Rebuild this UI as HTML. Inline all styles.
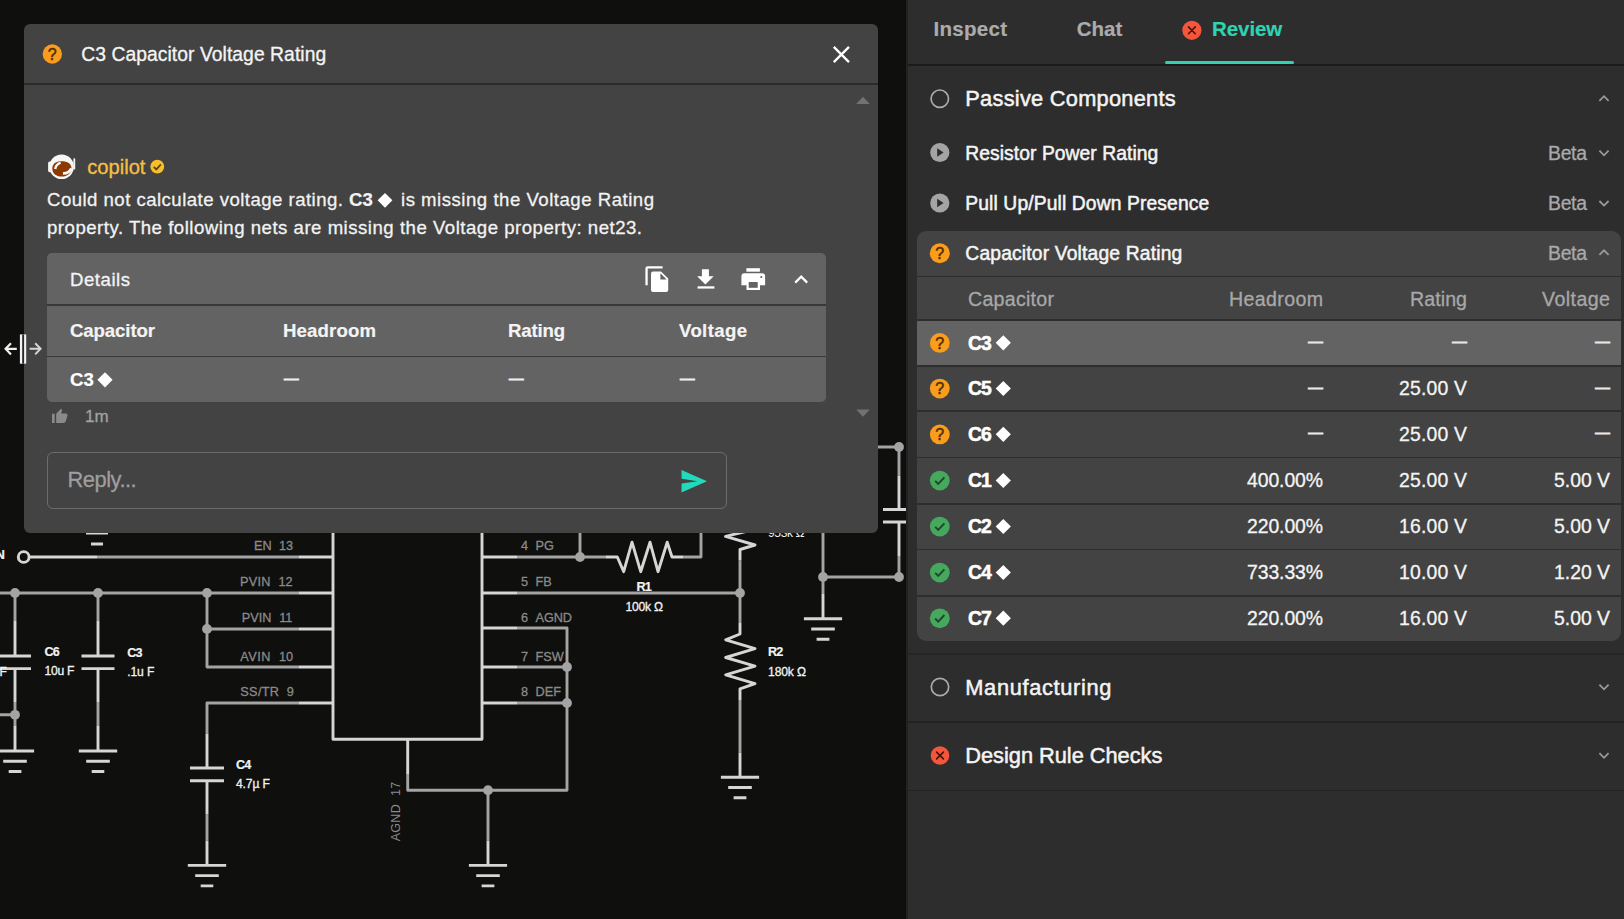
<!DOCTYPE html>
<html lang="en"><head><meta charset="utf-8"><title>Capacitor Voltage Rating review</title>
<style>
html,body{margin:0;padding:0;}
body{width:1624px;height:919px;overflow:hidden;background:#0f0f0e;font-family:"Liberation Sans", sans-serif;color:#fff;position:relative;}
.abs{position:absolute;}
.t{position:absolute;white-space:nowrap;line-height:1;-webkit-text-stroke:0.3px currentColor;}
.ns{-webkit-text-stroke:0.2px currentColor;}
.md{-webkit-text-stroke:0.5px currentColor;}
.bd{-webkit-text-stroke:0.5px currentColor;}
.ds{-webkit-text-stroke:0.8px currentColor;}
svg{position:absolute;left:0;top:0;overflow:visible;}
.w{fill:none;stroke:#d6d6d6;stroke-width:2.9;stroke-linecap:butt;stroke-linejoin:round;}
.n{fill:none;stroke:#a4a4a4;stroke-width:2.9;stroke-linecap:butt;stroke-linejoin:round;}
.d{fill:#a4a4a4;stroke:none;}
</style></head><body>
<svg width="1624" height="919" viewBox="0 0 1624 919">
<path class="n" d="M97 557H299M0 593H299M207 629H299M207 593V667H299M299 703H207V733.5M207 814.5V840.7M407.7 774V790.2H567V628H517M517 667H567M517 703H567M488 790.2V840.5M15 593V621M15 702V726M0 714.8H15M98 593V621M98 702V726M517 557H606M580 557V520M683 557H701V520M517 593H740M740 560.5V623M740 700V752.5M823 520V594M823 577H899M870 447H899V475.5M899 556V577"/>
<path class="w" d="M29 557H97M299 557H333M299 593H333M299 629H333M299 667H333M299 703H333M207 733.5V768M190 768H224M190 780.7H224M207 780.7V814.5M207 840.7V865.4M187.8 865.4H226.2M195.2 875.6H218.8M200.7 885.9H213.3M333 520V739.3H482V520M407.7 739.3V774M482 628H517M482 667H517M482 703H517M488 840.5V865.4M468.9 865.4H507.1M476.2 875.6H499.8M481.6 885.9H494.4M15 621V656M0 656H31M0 668.6H31M15 668.6V702M15 726V751M-4.1 751.0H34.1M3.2 761.2H26.8M8.7 771.5H21.4M98 621V656M81.500 656H114.500M81.500 668.6H114.500M98 668.6V702M98 726V751M78.8 751.0H117.2M86.2 761.2H109.8M91.7 771.5H104.3M86 533H108M91 544H103M482 557H517M606 557H617.3L623.7 571.7L632 542.2L640.7 571.7L650 542.2L658 571.7L667.2 542.2L672 557H683M482 593H517M752 530L725.5 536.3L755 545L740 549.5V560.5M740 623V634L725.7 639.8L755 648.7L725.7 657.5L755 666.2L725.7 674.9L755 683.6L740 688.8V700M740 752.5V777.2M720.9 777.2H759.1M728.2 787.5H751.8M733.6 797.7H746.4M823 594V618.7M803.9 618.7H842.1M811.2 629.0H834.8M816.6 639.2H829.4M899 475.5V509.5M883 509.5H906M883 522H906M899 522V556"/>
<circle class="d" cx="15" cy="593" r="4.9"/><circle class="d" cx="98" cy="593" r="4.9"/><circle class="d" cx="207" cy="593" r="4.9"/><circle class="d" cx="207" cy="629" r="4.9"/><circle class="d" cx="15" cy="714.8" r="4.9"/><circle class="d" cx="580" cy="557" r="4.9"/><circle class="d" cx="740" cy="593" r="4.9"/><circle class="d" cx="567" cy="667" r="4.9"/><circle class="d" cx="567" cy="703" r="4.9"/><circle class="d" cx="488" cy="790.2" r="4.9"/><circle class="d" cx="823" cy="577" r="4.9"/><circle class="d" cx="899" cy="577" r="4.9"/><circle class="d" cx="899" cy="447" r="4.9"/>
<circle cx="23.700" cy="557" r="5.400" fill="#0f0f0e" stroke="#d6d6d6" stroke-width="2.9"/>
<text x="768" y="537" font-family='"Liberation Sans", sans-serif' font-size="12.1" fill="#f0f0f0" letter-spacing="-0.4">953k Ω</text>
<text transform="translate(400.3 841.3) rotate(-90)" font-family='"Liberation Sans", sans-serif' font-size="12.5" fill="#8a8a8a" letter-spacing="0.3" word-spacing="4.2">AGND 17</text>
</svg>

<div class="abs" style="left:24px;top:24px;width:854px;height:508.500px;background:#434343;border-radius:6px;"></div>
<div class="abs" style="left:24px;top:83.4px;width:854px;height:1.6px;background:#2b2b2b;"></div>
<div class="abs" style="left:47px;top:253px;width:779px;height:148.500px;background:#636363;border-radius:5px;"></div>
<div class="abs" style="left:47px;top:304.2px;width:779px;height:1.7px;background:#383838;"></div>
<div class="abs" style="left:47px;top:355.8px;width:779px;height:1.7px;background:#383838;"></div>
<div class="abs" style="left:47px;top:452px;width:678px;height:55px;border:1px solid #6c6c6c;border-radius:6px;"></div>

<div class="abs" style="left:906px;top:0;width:718px;height:919px;background:#2d2d2d;"></div>
<div class="abs" style="left:906px;top:0;width:1.5px;height:919px;background:#222;"></div>
<div class="abs" style="left:908px;top:63.5px;width:716px;height:2px;background:#1b1b1b;"></div>
<div class="abs" style="left:1165px;top:61px;width:129px;height:3px;background:#2fd3b1;border-radius:1.5px;"></div>
<div class="abs" style="left:916.5px;top:231px;width:704.5px;height:410px;background:#434343;border-radius:9px;overflow:hidden;">
  <div class="abs" style="left:0;top:89.1px;width:705px;height:46.1px;background:#636363;"></div>
  <div class="abs" style="left:0;top:44.7px;width:705px;height:1.8px;background:#2e2e2e;"></div>
  <div class="abs" style="left:0;top:88.2px;width:705px;height:1.8px;background:#2e2e2e;"></div>
  <div class="abs" style="left:0;top:134.3px;width:705px;height:1.8px;background:#2e2e2e;"></div>
  <div class="abs" style="left:0;top:179.2px;width:705px;height:1.8px;background:#2e2e2e;"></div>
  <div class="abs" style="left:0;top:225.6px;width:705px;height:1.8px;background:#2e2e2e;"></div>
  <div class="abs" style="left:0;top:271.9px;width:705px;height:1.8px;background:#2e2e2e;"></div>
  <div class="abs" style="left:0;top:317.7px;width:705px;height:1.8px;background:#2e2e2e;"></div>
  <div class="abs" style="left:0;top:364.0px;width:705px;height:1.8px;background:#2e2e2e;"></div>
</div>
<div class="abs" style="left:908px;top:653px;width:716px;height:1.5px;background:#262626;"></div>
<div class="abs" style="left:908px;top:721px;width:716px;height:1.5px;background:#222;"></div>
<div class="abs" style="left:908px;top:789.5px;width:716px;height:1.5px;background:#222;"></div>
<span id="t0" class="t ns" style="top:547.85px;font-size:13px;left:-4.60px;font-weight:700;color:#f2f2f2;">N</span>
<span id="t1" class="t" style="top:665.89px;font-size:12.1px;left:-0.50px;color:#f2f2f2;">F</span>
<span id="t2" class="t ns" style="top:645.74px;font-size:12.6px;left:44.50px;font-weight:700;color:#f2f2f2;letter-spacing:-0.900px;">C6</span>
<span id="t3" class="t" style="top:664.79px;font-size:12.1px;left:44.50px;color:#f2f2f2;letter-spacing:-0.234px;">10u F</span>
<span id="t4" class="t ns" style="top:646.64px;font-size:12.6px;left:127.30px;font-weight:700;color:#f2f2f2;letter-spacing:-0.900px;">C3</span>
<span id="t5" class="t" style="top:666.09px;font-size:12.1px;left:127.30px;color:#f2f2f2;letter-spacing:-0.141px;">.1u F</span>
<span id="t6" class="t ns" style="top:758.64px;font-size:12.6px;left:236.00px;font-weight:700;color:#f2f2f2;letter-spacing:-0.900px;">C4</span>
<span id="t7" class="t" style="top:778.49px;font-size:12.1px;left:236.00px;color:#f2f2f2;letter-spacing:-0.106px;">4.7µ F</span>
<span id="t8" class="t ns" style="top:645.84px;font-size:12.6px;left:768.10px;font-weight:700;color:#f2f2f2;letter-spacing:-0.900px;">R2</span>
<span id="t9" class="t" style="top:666.09px;font-size:12.1px;left:768.10px;color:#f2f2f2;letter-spacing:-0.148px;">180k Ω</span>
<span id="t10" class="t ns" style="top:580.84px;font-size:12.6px;left:636.50px;font-weight:700;color:#f2f2f2;letter-spacing:-0.900px;">R1</span>
<span id="t11" class="t" style="top:600.89px;font-size:12.1px;left:625.50px;color:#f2f2f2;letter-spacing:-0.228px;">100k Ω</span>
<span id="t12" class="t" style="top:540.00px;font-size:12.7px;left:254.00px;color:#8a8a8a;">EN</span>
<span id="t13" class="t" style="top:540.00px;font-size:12.7px;left:279.00px;color:#8a8a8a;">13</span>
<span id="t14" class="t" style="top:576.00px;font-size:12.7px;left:240.00px;color:#8a8a8a;letter-spacing:0.292px;">PVIN</span>
<span id="t15" class="t" style="top:576.00px;font-size:12.7px;left:278.40px;color:#8a8a8a;">12</span>
<span id="t16" class="t" style="top:611.60px;font-size:12.7px;left:241.80px;color:#8a8a8a;letter-spacing:0.025px;">PVIN</span>
<span id="t17" class="t" style="top:611.60px;font-size:12.7px;left:279.20px;color:#8a8a8a;">11</span>
<span id="t18" class="t" style="top:650.60px;font-size:12.7px;left:240.30px;color:#8a8a8a;letter-spacing:0.509px;">AVIN</span>
<span id="t19" class="t" style="top:650.60px;font-size:12.7px;left:278.90px;color:#8a8a8a;">10</span>
<span id="t20" class="t" style="top:686.30px;font-size:12.7px;left:240.30px;color:#8a8a8a;letter-spacing:0.331px;">SS/TR</span>
<span id="t21" class="t" style="top:686.30px;font-size:12.7px;left:286.70px;color:#8a8a8a;">9</span>
<span id="t22" class="t" style="top:540.00px;font-size:12.7px;left:521.00px;color:#8a8a8a;">4</span>
<span id="t23" class="t" style="top:540.00px;font-size:12.7px;left:535.60px;color:#8a8a8a;">PG</span>
<span id="t24" class="t" style="top:576.00px;font-size:12.7px;left:521.00px;color:#8a8a8a;">5</span>
<span id="t25" class="t" style="top:576.00px;font-size:12.7px;left:535.60px;color:#8a8a8a;">FB</span>
<span id="t26" class="t" style="top:611.60px;font-size:12.7px;left:521.00px;color:#8a8a8a;">6</span>
<span id="t27" class="t" style="top:611.60px;font-size:12.7px;left:535.60px;color:#8a8a8a;letter-spacing:-0.119px;">AGND</span>
<span id="t28" class="t" style="top:650.60px;font-size:12.7px;left:521.00px;color:#8a8a8a;">7</span>
<span id="t29" class="t" style="top:650.60px;font-size:12.7px;left:535.60px;color:#8a8a8a;">FSW</span>
<span id="t30" class="t" style="top:686.30px;font-size:12.7px;left:521.00px;color:#8a8a8a;">8</span>
<span id="t31" class="t" style="top:686.30px;font-size:12.7px;left:535.60px;color:#8a8a8a;">DEF</span>
<span id="t32" class="t" style="top:45.37px;font-size:19.3px;left:81.20px;color:#f4f4f4;letter-spacing:0.065px;">C3 Capacitor Voltage Rating</span>
<span id="t33" class="t" style="top:156.73px;font-size:20.2px;left:87.20px;color:#f6c042;letter-spacing:-0.010px;">copilot</span>
<span id="t34" class="t" style="top:191.21px;font-size:18.6px;left:47.00px;color:#f2f2f2;letter-spacing:0.467px;">Could not calculate voltage rating.</span>
<span id="t35" class="t ns" style="top:191.21px;font-size:18.6px;left:349.00px;font-weight:700;color:#f2f2f2;">C3</span>
<span id="t36" class="t" style="top:191.21px;font-size:18.6px;left:401.00px;color:#f2f2f2;letter-spacing:0.509px;">is missing the Voltage Rating</span>
<span id="t37" class="t" style="top:218.71px;font-size:18.6px;left:47.00px;color:#f2f2f2;letter-spacing:0.507px;">property. The following nets are missing the Voltage property: net23.</span>
<span id="t38" class="t" style="top:270.91px;font-size:18.6px;left:70.00px;color:#f4f4f4;letter-spacing:0.526px;">Details</span>
<span id="t39" class="t ns" style="top:322.21px;font-size:18.6px;left:70.00px;font-weight:700;color:#f4f4f4;letter-spacing:-0.096px;">Capacitor</span>
<span id="t40" class="t ns" style="top:322.21px;font-size:18.6px;left:283.00px;font-weight:700;color:#f4f4f4;letter-spacing:0.150px;">Headroom</span>
<span id="t41" class="t ns" style="top:322.21px;font-size:18.6px;left:508.00px;font-weight:700;color:#f4f4f4;letter-spacing:-0.169px;">Rating</span>
<span id="t42" class="t ns" style="top:322.21px;font-size:18.6px;left:679.00px;font-weight:700;color:#f4f4f4;letter-spacing:0.370px;">Voltage</span>
<span id="t43" class="t ns" style="top:371.21px;font-size:18.6px;left:70.00px;font-weight:700;">C3</span>
<span id="t44" class="t ds" style="top:371.27px;font-size:14.6px;left:283.90px;color:#eee;">—</span>
<span id="t45" class="t ds" style="top:371.27px;font-size:14.6px;left:508.90px;color:#eee;">—</span>
<span id="t46" class="t ds" style="top:371.27px;font-size:14.6px;left:679.90px;color:#eee;">—</span>
<span id="t47" class="t" style="top:408.20px;font-size:17px;left:85.00px;color:#a2a2a2;">1m</span>
<span id="t48" class="t" style="top:468.60px;font-size:21.9px;left:67.40px;color:#9e9e9e;letter-spacing:-0.471px;">Reply...</span>
<span id="t49" class="t ns" style="top:19.29px;font-size:20.5px;left:933.50px;font-weight:700;color:#ababab;letter-spacing:0.286px;">Inspect</span>
<span id="t50" class="t ns" style="top:19.29px;font-size:20.5px;left:1076.70px;font-weight:700;color:#ababab;letter-spacing:0.046px;">Chat</span>
<span id="t51" class="t ns" style="top:19.29px;font-size:20.5px;left:1212.00px;font-weight:700;color:#2fd3b1;letter-spacing:-0.071px;">Review</span>
<span id="t52" class="t md" style="top:88.15px;font-size:21.8px;left:965.30px;color:#f4f4f4;letter-spacing:0.261px;">Passive Components</span>
<span id="t53" class="t md" style="top:143.97px;font-size:19.3px;left:965.30px;color:#f4f4f4;letter-spacing:0.059px;">Resistor Power Rating</span>
<span id="t54" class="t md" style="top:194.27px;font-size:19.3px;left:965.30px;color:#f4f4f4;letter-spacing:0.114px;">Pull Up/Pull Down Presence</span>
<span id="t55" class="t md" style="top:243.77px;font-size:19.3px;left:965.30px;color:#f4f4f4;letter-spacing:0.160px;">Capacitor Voltage Rating</span>
<span id="t56" class="t" style="top:143.82px;font-size:19.4px;left:1548.00px;color:#a9a9a9;letter-spacing:-0.297px;">Beta</span>
<span id="t57" class="t" style="top:194.12px;font-size:19.4px;left:1548.00px;color:#a9a9a9;letter-spacing:-0.297px;">Beta</span>
<span id="t58" class="t" style="top:243.62px;font-size:19.4px;left:1548.00px;color:#a9a9a9;letter-spacing:-0.297px;">Beta</span>
<span id="t59" class="t" style="top:289.73px;font-size:19.6px;left:968.00px;color:#a8a8a8;letter-spacing:0.268px;">Capacitor</span>
<span id="t60" class="t" style="top:289.73px;font-size:19.6px;right:300.64px;color:#a8a8a8;letter-spacing:0.359px;">Headroom</span>
<span id="t61" class="t" style="top:289.73px;font-size:19.6px;right:156.93px;color:#a8a8a8;letter-spacing:0.072px;">Rating</span>
<span id="t62" class="t" style="top:289.73px;font-size:19.6px;right:13.56px;color:#a8a8a8;letter-spacing:0.438px;">Voltage</span>
<span id="t63" class="t bd" style="top:333.62px;font-size:19.4px;left:968.00px;font-weight:700;letter-spacing:-1.100px;">C3</span>
<span id="t64" class="t ds" style="top:333.87px;font-size:14.6px;left:1308.30px;color:#e8e8e8;">—</span>
<span id="t65" class="t ds" style="top:333.87px;font-size:14.6px;left:1452.30px;color:#e8e8e8;">—</span>
<span id="t66" class="t ds" style="top:333.87px;font-size:14.6px;left:1595.30px;color:#e8e8e8;">—</span>
<span id="t67" class="t bd" style="top:379.32px;font-size:19.4px;left:968.00px;font-weight:700;letter-spacing:-1.100px;">C5</span>
<span id="t68" class="t ds" style="top:379.57px;font-size:14.6px;left:1308.30px;color:#e8e8e8;">—</span>
<span id="t69" class="t ds" style="top:379.57px;font-size:14.6px;left:1595.30px;color:#e8e8e8;">—</span>
<span id="t70" class="t" style="top:379.32px;font-size:19.4px;right:156.81px;color:#f4f4f4;letter-spacing:0.190px;">25.00 V</span>
<span id="t71" class="t bd" style="top:425.12px;font-size:19.4px;left:968.00px;font-weight:700;letter-spacing:-1.100px;">C6</span>
<span id="t72" class="t ds" style="top:425.37px;font-size:14.6px;left:1308.30px;color:#e8e8e8;">—</span>
<span id="t73" class="t ds" style="top:425.37px;font-size:14.6px;left:1595.30px;color:#e8e8e8;">—</span>
<span id="t74" class="t" style="top:425.12px;font-size:19.4px;right:156.81px;color:#f4f4f4;letter-spacing:0.190px;">25.00 V</span>
<span id="t75" class="t bd" style="top:471.32px;font-size:19.4px;left:968.00px;font-weight:700;letter-spacing:-1.100px;">C1</span>
<span id="t76" class="t" style="top:471.32px;font-size:19.4px;right:301.09px;color:#f4f4f4;letter-spacing:-0.094px;">400.00%</span>
<span id="t77" class="t" style="top:471.32px;font-size:19.4px;right:156.81px;color:#f4f4f4;letter-spacing:0.190px;">25.00 V</span>
<span id="t78" class="t" style="top:471.32px;font-size:19.4px;right:14.01px;color:#f4f4f4;letter-spacing:-0.013px;">5.00 V</span>
<span id="t79" class="t bd" style="top:517.32px;font-size:19.4px;left:968.00px;font-weight:700;letter-spacing:-1.100px;">C2</span>
<span id="t80" class="t" style="top:517.32px;font-size:19.4px;right:301.09px;color:#f4f4f4;letter-spacing:-0.094px;">220.00%</span>
<span id="t81" class="t" style="top:517.32px;font-size:19.4px;right:156.81px;color:#f4f4f4;letter-spacing:0.190px;">16.00 V</span>
<span id="t82" class="t" style="top:517.32px;font-size:19.4px;right:14.01px;color:#f4f4f4;letter-spacing:-0.013px;">5.00 V</span>
<span id="t83" class="t bd" style="top:563.32px;font-size:19.4px;left:968.00px;font-weight:700;letter-spacing:-1.100px;">C4</span>
<span id="t84" class="t" style="top:563.32px;font-size:19.4px;right:301.09px;color:#f4f4f4;letter-spacing:-0.094px;">733.33%</span>
<span id="t85" class="t" style="top:563.32px;font-size:19.4px;right:156.81px;color:#f4f4f4;letter-spacing:0.190px;">10.00 V</span>
<span id="t86" class="t" style="top:563.32px;font-size:19.4px;right:14.01px;color:#f4f4f4;letter-spacing:-0.013px;">1.20 V</span>
<span id="t87" class="t bd" style="top:609.02px;font-size:19.4px;left:968.00px;font-weight:700;letter-spacing:-1.100px;">C7</span>
<span id="t88" class="t" style="top:609.02px;font-size:19.4px;right:301.09px;color:#f4f4f4;letter-spacing:-0.094px;">220.00%</span>
<span id="t89" class="t" style="top:609.02px;font-size:19.4px;right:156.81px;color:#f4f4f4;letter-spacing:0.190px;">16.00 V</span>
<span id="t90" class="t" style="top:609.02px;font-size:19.4px;right:14.01px;color:#f4f4f4;letter-spacing:-0.013px;">5.00 V</span>
<span id="t91" class="t md" style="top:677.15px;font-size:21.8px;left:965.30px;color:#f4f4f4;letter-spacing:0.656px;">Manufacturing</span>
<span id="t92" class="t md" style="top:745.15px;font-size:21.8px;left:965.30px;color:#f4f4f4;letter-spacing:-0.028px;">Design Rule Checks</span>
<svg width="1624" height="919" viewBox="0 0 1624 919">
<circle cx="52.3" cy="54" r="9.7" fill="#fb9d1c"/><text x="52.3" y="59.7" text-anchor="middle" font-family='"Liberation Sans", sans-serif' font-size="16" fill="#4f2e02" stroke="#4f2e02" stroke-width="0.5">?</text><path d="M833.8 46.9l15.2 15.2m0-15.2l-15.2 15.2" fill="none" stroke="#fff" stroke-width="2.3"/><path d="M856.2 104h13.6l-6.8-7.3z" fill="#727272"/><path d="M856.2 409.5h13.6l-6.8 7.3z" fill="#727272"/><rect x="48.1" y="161.6" width="5" height="10.6" rx="1.6" fill="#f6f6f6"/><path d="M74.3 158.400v11" stroke="#f6f6f6" stroke-width="1.800" fill="none"/><circle cx="61.6" cy="166.8" r="12.3" fill="#f6f6f6"/><path d="M52.3 168.4c0-4.6 3.6-7.2 9.4-7.2s9.8 2.4 9.8 7c0 5-4.2 8.4-9.8 8.4s-9.4-3.4-9.4-8.2z" fill="#8c3a02"/><path d="M55.2 169q.6-4.6 5.4-6.4" fill="none" stroke="#f6f6f6" stroke-width="2.5"/><path d="M63 173.300q5.800 .3 8.400-5" fill="none" stroke="#f6f6f6" stroke-width="2.7"/><circle cx="157.3" cy="166.7" r="6.9" fill="#f7bf2c"/><path d="M153.8 166.9l2.5 2.5l4.6-5" fill="none" stroke="#5b4210" stroke-width="1.7"/><path d="M377.6 200.3L385 192.9L392.4 200.3L385 207.70000000000002z" fill="#fff"/><path d="M97.4 379.8L105 372.2L112.6 379.8L105 387.40000000000003z" fill="#fff"/><path d="M645.4 285.2V268.6a2.3 2.3 0 0 1 2.3-2.3H662.6v2.3H647.7V285.2z" fill="#fff"/><path d="M653 271.4h8l7.2 7.2v11.4a2 2 0 0 1-2 2h-13.2a2 2 0 0 1-2-2v-16.6a2 2 0 0 1 2-2z" fill="#fff"/><path d="M660.4 273.2v6.2h6.2z" fill="#636363"/><path d="M701.9 269.2h7v7h4.8l-8.3 8.3l-8.3-8.3h4.8z" fill="#fff"/><rect x="697.6" y="286.3" width="16.8" height="2.3" fill="#fff"/><rect x="746.4" y="268.2" width="13.5" height="3.5" fill="#fff"/><path d="M744.5 273.2h17.6a3 3 0 0 1 3 3v9h-5.1v4.9h-13.5v-4.9h-5.1v-9a3 3 0 0 1 3-3z" fill="#fff"/><rect x="748.7" y="282" width="9" height="5.8" fill="#636363"/><circle cx="761.3" cy="277" r="1.1" fill="#636363"/><path d="M795.2 282.6l6 -6l6 6" fill="none" stroke="#fff" stroke-width="2.2"/><path d="M52 413.8h2.7v9.2h-2.7zM56.2 413.8l4.7-5q1.3 .2 1.1 1.7l-.8 3h5q1.6 .3 1.3 2l-1.8 6.1q-.5 1.4-2 1.4h-7.5z" fill="#8a8a8a"/><path d="M681.5 470l25.5 11.2l-25.5 11.2l.1-8.8l16-2.4l-16-2.4z" fill="#22dabb"/><rect x="19.9" y="334.4" width="6.3" height="29.3" fill="#f4f4f4"/><rect x="22.2" y="334.4" width="1.9" height="29.3" fill="#2a2a2a"/><path d="M5.8 348.8h11M11 343.2l-5.4 5.6l5.4 5.6" stroke="#f0f0f0" stroke-width="2.2" fill="none"/><path d="M29.6 348.8h10.6M35.2 343.2l5.4 5.6l-5.4 5.6" stroke="#d4d4d4" stroke-width="2" fill="none"/><circle cx="1191.9" cy="30.3" r="9.6" fill="#f5553a"/><path d="M1188.5 26.900000000000002l6.8 6.8m0-6.8l-6.8 6.8" fill="none" stroke="#43160c" stroke-width="1.600" stroke-linecap="round"/><circle cx="939.8" cy="98.7" r="8.7" fill="none" stroke="#ababab" stroke-width="1.700"/><circle cx="939.8" cy="152.5" r="9.6" fill="#a4a4a4"/><path d="M937.1999999999999 148.3v8.4l6.4-4.2z" fill="#2d2d2d"/><circle cx="939.8" cy="203" r="9.6" fill="#a4a4a4"/><path d="M937.1999999999999 198.8v8.4l6.4-4.2z" fill="#2d2d2d"/><circle cx="939.8" cy="253.2" r="10" fill="#fb9d1c"/><text x="939.8" y="258.9" text-anchor="middle" font-family='"Liberation Sans", sans-serif' font-size="16" fill="#4f2e02" stroke="#4f2e02" stroke-width="0.5">?</text><path d="M1599.4 100.8l4.6 -4.6l4.6 4.6" fill="none" stroke="#9a9a9a" stroke-width="1.8"/><path d="M1599.4 150.7l4.6 4.6l4.6 -4.6" fill="none" stroke="#9a9a9a" stroke-width="1.8"/><path d="M1599.4 201.0l4.6 4.6l4.6 -4.6" fill="none" stroke="#9a9a9a" stroke-width="1.8"/><path d="M1599.4 254.9l4.6 -4.6l4.6 4.6" fill="none" stroke="#9a9a9a" stroke-width="1.8"/><circle cx="939.8" cy="342.90000000000003" r="9.9" fill="#fb9d1c"/><text x="939.8" y="348.6" text-anchor="middle" font-family='"Liberation Sans", sans-serif' font-size="16" fill="#4f2e02" stroke="#4f2e02" stroke-width="0.5">?</text><path d="M995.6999999999999 342.8L1003.3 335.2L1010.9 342.8L1003.3 350.40000000000003z" fill="#fff"/><circle cx="939.8" cy="388.6" r="9.9" fill="#fb9d1c"/><text x="939.8" y="394.3" text-anchor="middle" font-family='"Liberation Sans", sans-serif' font-size="16" fill="#4f2e02" stroke="#4f2e02" stroke-width="0.5">?</text><path d="M995.6999999999999 388.5L1003.3 380.9L1010.9 388.5L1003.3 396.1z" fill="#fff"/><circle cx="939.8" cy="434.40000000000003" r="9.9" fill="#fb9d1c"/><text x="939.8" y="440.1" text-anchor="middle" font-family='"Liberation Sans", sans-serif' font-size="16" fill="#4f2e02" stroke="#4f2e02" stroke-width="0.5">?</text><path d="M995.6999999999999 434.3L1003.3 426.7L1010.9 434.3L1003.3 441.90000000000003z" fill="#fff"/><circle cx="939.8" cy="480.6" r="9.9" fill="#45a85c"/><path d="M935.1999999999999 480.8l3 3.1l6.2-6.6" fill="none" stroke="#1c4a29" stroke-width="1.9" stroke-linecap="butt" stroke-linejoin="miter"/><path d="M995.6999999999999 480.5L1003.3 472.9L1010.9 480.5L1003.3 488.1z" fill="#fff"/><circle cx="939.8" cy="526.5999999999999" r="9.9" fill="#45a85c"/><path d="M935.1999999999999 526.8l3 3.1l6.2-6.6" fill="none" stroke="#1c4a29" stroke-width="1.9" stroke-linecap="butt" stroke-linejoin="miter"/><path d="M995.6999999999999 526.5L1003.3 518.9L1010.9 526.5L1003.3 534.1z" fill="#fff"/><circle cx="939.8" cy="572.5999999999999" r="9.9" fill="#45a85c"/><path d="M935.1999999999999 572.8l3 3.1l6.2-6.6" fill="none" stroke="#1c4a29" stroke-width="1.9" stroke-linecap="butt" stroke-linejoin="miter"/><path d="M995.6999999999999 572.5L1003.3 564.9L1010.9 572.5L1003.3 580.1z" fill="#fff"/><circle cx="939.8" cy="618.3" r="9.9" fill="#45a85c"/><path d="M935.1999999999999 618.5l3 3.1l6.2-6.6" fill="none" stroke="#1c4a29" stroke-width="1.9" stroke-linecap="butt" stroke-linejoin="miter"/><path d="M995.6999999999999 618.2L1003.3 610.6L1010.9 618.2L1003.3 625.8000000000001z" fill="#fff"/><circle cx="940" cy="687" r="8.7" fill="none" stroke="#ababab" stroke-width="1.700"/><circle cx="940" cy="755.5" r="9.3" fill="#f5553a"/><path d="M936.6 752.1l6.8 6.8m0-6.8l-6.8 6.8" fill="none" stroke="#43160c" stroke-width="1.600" stroke-linecap="round"/><path d="M1599.4 684.7l4.6 4.6l4.6 -4.6" fill="none" stroke="#9a9a9a" stroke-width="1.8"/><path d="M1599.4 753.2l4.6 4.6l4.6 -4.6" fill="none" stroke="#9a9a9a" stroke-width="1.8"/></svg>
</body></html>
